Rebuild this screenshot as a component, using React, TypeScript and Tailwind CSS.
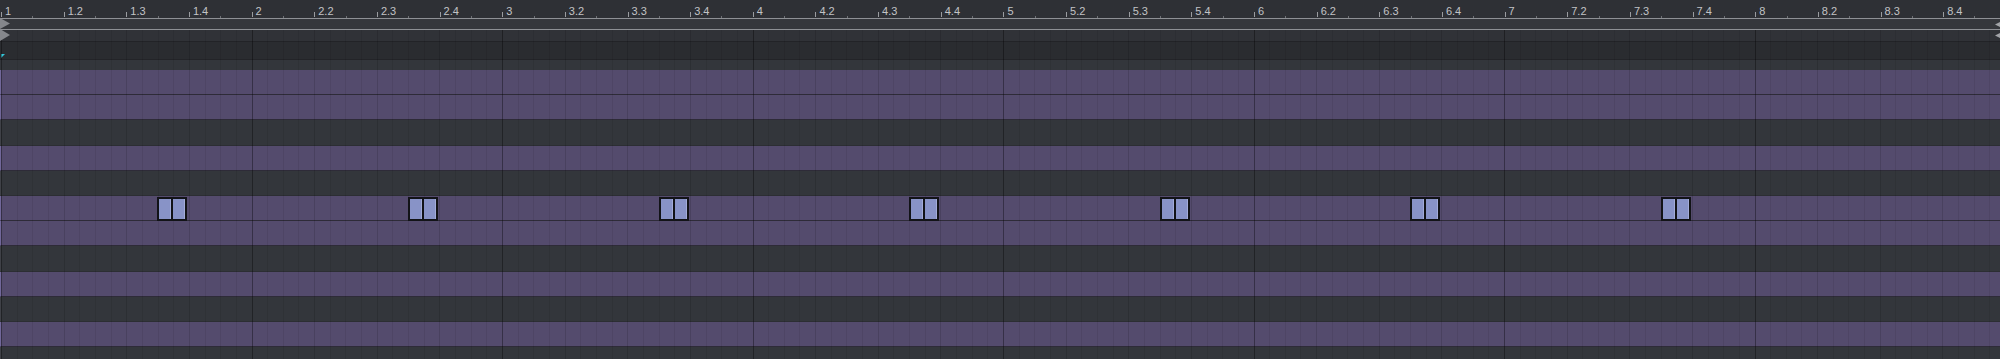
import React from "react";

const BAR = 250.6;
const X0 = 1;

const rows: ("w" | "b")[] = ["w", "w", "b", "w", "b", "w", "w", "b", "w", "b", "w", "b"];

function Ruler() {
  const items: { x: number; label: string }[] = [];
  for (let b = 0; b < 8; b++) {
    for (let k = 0; k < 4; k++) {
      items.push({ x: X0 + b * BAR + (k * BAR) / 4, label: k === 0 ? `${b + 1}` : `${b + 1}.${k + 1}` });
    }
  }
  return (
    <div className="relative h-[18px] shrink-0 bg-[#2e3035]">
      {items.map((it) => (
        <React.Fragment key={it.label}>
          <div className="absolute top-[12px] h-[5px] w-px bg-[#9a9ca0]" style={{ left: it.x }} />
          <div className="absolute top-[16px] h-[2px] w-px bg-[#6f7176]" style={{ left: it.x + BAR / 8 }} />
          <div
            className="absolute top-[6px] text-[11px] leading-[11px] text-[#c2c3c6] whitespace-nowrap"
            style={{ left: it.x + 4 }}
          >
            {it.label}
          </div>
        </React.Fragment>
      ))}
    </div>
  );
}

function GridLines() {
  const cells = Array.from({ length: 130 }, (_, i) => i);
  return (
    <div className="pointer-events-none absolute inset-y-0 left-px right-0 flex">
      {cells.map((i) => (
        <div
          key={i}
          className={
            "h-full w-[15.6625px] shrink-0 border-l " +
            (i % 16 === 0 ? "border-black/35" : i % 4 === 0 ? "border-black/[0.12]" : "border-black/[0.07]")
          }
        />
      ))}
    </div>
  );
}

function NotePair({ x }: { x: number }) {
  return (
    <>
      <div
        className="absolute z-10 top-px bottom-[-1px] w-[16px] border-2 border-[#121317] bg-[#8893c7] shadow-[inset_-1px_0_0_#a3acd9]"
        style={{ left: x }}
      />
      <div
        className="absolute z-10 top-px bottom-[-1px] w-[16px] border-2 border-[#121317] bg-[#8893c7] shadow-[inset_-1px_0_0_#a3acd9]"
        style={{ left: x + 14 }}
      />
    </>
  );
}

export default function App() {
  return (
    <div className="relative flex h-[359px] w-[2000px] flex-col overflow-hidden bg-[#2b2d31] font-['Liberation_Sans',Arial,sans-serif]">
      <Ruler />
      <div className="h-px shrink-0 bg-[#8e9095]" />
      <div className="h-[10px] shrink-0 bg-[#35373c]" />
      <div className="h-px shrink-0 bg-[#8e9095]" />
      <div className="relative flex flex-1 flex-col">
        <div className="h-[11px] shrink-0 bg-[#303237]" />
        <div className="h-px shrink-0 bg-[#222327]" />
        <div className="relative h-[17px] shrink-0 bg-[#2a2c30]">
          <svg className="absolute left-[1px] top-[12px]" width="4" height="4" viewBox="0 0 4 4">
            <polygon points="0,0 4,0 0,4" fill="#35c6d8" />
          </svg>
        </div>
        <div className="h-px shrink-0 bg-[#232428]" />
        <div className="h-[10px] shrink-0 bg-[#33363b]" />
        {rows.map((r, i) => (
          <div
            key={i}
            className={
              "relative h-[25.2px] shrink-0 border-b border-l " +
              (r === "w" ? "bg-[#544b6d] border-b-[#2e2b38] border-l-[#71679a]" : "bg-[#33363b] border-b-[#2c2e33] border-l-[#3f4147]")
            }
          >
            {i === 5 && Array.from({ length: 7 }, (_, b) => <NotePair key={b} x={156.3 + b * BAR} />)}
          </div>
        ))}
        <GridLines />
      </div>
      <svg className="absolute left-0 top-[18px]" width="11" height="11" viewBox="0 0 11 11">
        <polygon points="0,0 10,5.5 0,11" fill="#85878c" />
      </svg>
      <svg className="absolute left-0 top-[29px]" width="11" height="12" viewBox="0 0 11 12">
        <polygon points="0,0 10,6 0,12" fill="#85878c" />
      </svg>
      <svg className="absolute right-0 top-[22px]" width="5" height="5" viewBox="0 0 5 5">
        <polygon points="5,0 0,2.5 5,5" fill="#a2a4a8" />
      </svg>
      <svg className="absolute right-0 top-[33px]" width="5" height="5" viewBox="0 0 5 5">
        <polygon points="5,0 0,2.5 5,5" fill="#a2a4a8" />
      </svg>
    </div>
  );
}
